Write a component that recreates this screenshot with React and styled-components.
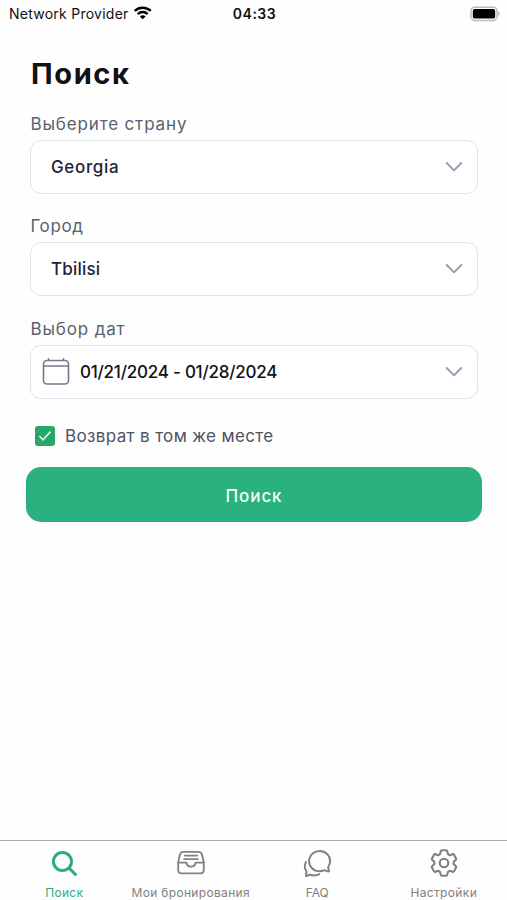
import { useState } from "react";
import styled, { createGlobalStyle } from "styled-components";
import { IoSearch, IoChatbubblesOutline } from "react-icons/io5";
import { HiOutlineCog6Tooth } from "react-icons/hi2";

const GlobalStyle = createGlobalStyle`
    * {
        box-sizing: border-box;
    }
    body {
        margin: 0;
        background: #fefefe;
        font-family: Inter, "Liberation Sans", sans-serif;
    }
`;

const Tray = ({ size }) => (
    <svg width={size} height={size} viewBox="0 0 30 30" fill="none" stroke="currentColor" strokeWidth="1.8" strokeLinecap="round" strokeLinejoin="round">
        <path d="M2.2 14.2L3.9 6.8Q4.6 3.8 7.6 3.8H22.4Q25.4 3.8 26.1 6.8L27.8 14.2V21.8Q27.8 25.4 24.2 25.4H5.8Q2.2 25.4 2.2 21.8Z" />
        <path d="M2.2 14.6H10.6C10.9 20 19.1 20 19.4 14.6H27.8M8.8 7.6H21.2M8.2 11.2H21.8" />
    </svg>
);

const tabs = [
    { name: "Поиск", icon: IoSearch, size: 31, spacing: "0.3px" },
    { name: "Мои бронирования", icon: Tray, size: 30, spacing: "0.32px" },
    { name: "FAQ", icon: IoChatbubblesOutline, size: 31, spacing: "0" },
    { name: "Настройки", icon: HiOutlineCog6Tooth, size: 34, spacing: "0.35px" },
];

const Screen = styled.div`
    width: 100%;
    height: 900px;
    display: flex;
    flex-direction: column;
    overflow: hidden;
`;

const StatusBar = styled.header`
    height: 27px;
    padding: 0 7px 0 9px;
    display: grid;
    grid-template-columns: 1fr auto 1fr;
    align-items: center;
    color: #111;
`;

const Provider = styled.div`
    display: flex;
    align-items: center;
    gap: 5px;
    font-size: 14px;
    letter-spacing: 0.25px;
    white-space: nowrap;
`;

const Time = styled.div`
    font-size: 14px;
    font-weight: 600;
    letter-spacing: 0.5px;
`;

const BatteryIcon = styled.svg`
    justify-self: end;
    display: block;
`;

const Form = styled.main`
    flex: 1;
    padding: 28px 25px 0 26px;
`;

const Title = styled.h1`
    margin: 0 0 0 5px;
    height: 36px;
    line-height: 38px;
    font-size: 29px;
    font-weight: 700;
    letter-spacing: 1.6px;
    color: #101112;
`;

const Field = styled.div`
    margin: 0 4px;
    padding-top: 22px;

    & + & {
        padding-top: 21.4px;
    }
`;

const Label = styled.div`
    height: 27px;
    line-height: 22px;
    padding-left: 0.5px;
    font-size: 17px;
    letter-spacing: ${props => props.$spacing};
    color: #5b6070;
`;

const Select = styled.button`
    width: 448px;
    height: 54px;
    display: flex;
    align-items: center;
    padding: 0 14px 0 ${props => props.$withIcon ? "11px" : "20px"};
    border: 1.5px solid #dfe4e6;
    border-radius: 11px;
    background: #fff;
    color: ${props => props.$withIcon ? "#111214" : "#20233c"};
    font-family: inherit;
    font-size: 17px;
    font-weight: 500;
    text-align: left;
    cursor: pointer;
`;

const Value = styled.span`
    flex: 1;
    letter-spacing: ${props => props.$spacing};
`;

const CalendarIcon = styled.svg`
    margin-right: 10px;
`;

const CheckRow = styled.label`
    display: flex;
    align-items: center;
    height: 22px;
    margin: 26px 0 0 9px;
    font-size: 17px;
    letter-spacing: 0.36px;
    color: #4f5366;
    cursor: pointer;
`;

const CheckBox = styled.span`
    width: 20px;
    height: 20px;
    margin-right: 10px;
    display: flex;
    align-items: center;
    justify-content: center;
    border-radius: 3px;
    background: #27a768;
`;

const HiddenInput = styled.input`
    display: none;
`;

const SubmitButton = styled.button`
    width: 456px;
    height: 55px;
    margin-top: 20.5px;
    padding: 2px 0 0;
    border: none;
    border-radius: 15px;
    background: #2bb17f;
    color: #f4fffa;
    font-family: inherit;
    font-size: 17px;
    font-weight: 500;
    letter-spacing: 0.9px;
    cursor: pointer;
`;

const TabBar = styled.nav`
    height: 60px;
    padding-left: 1px;
    display: grid;
    grid-template-columns: repeat(4, 1fr);
    border-top: 1px solid #aaa;
`;

const Tab = styled.button`
    display: flex;
    flex-direction: column;
    align-items: center;
    padding: 7px 0 0;
    border: none;
    background: none;
    color: ${props => props.$active ? "#2bae7c" : "#808080"};
    font-family: inherit;
    cursor: pointer;
`;

const TabIcon = styled.span`
    height: 30px;
    display: flex;
    align-items: center;
`;

const TabLabel = styled.span`
    margin-top: 7px;
    line-height: 15px;
    font-size: 12px;
    letter-spacing: ${props => props.$spacing};
    white-space: nowrap;
`;

const Wifi = () => (
    <svg width="19" height="15" viewBox="0.8 0.6 20 15" fill="none" stroke="#000" strokeWidth="2.6">
        <path d="M1.6 5.4C6.2 0.9 13.8 0.9 18.4 5.4" />
        <path d="M4.8 8.7C7.7 5.8 12.3 5.8 15.2 8.7" />
        <path d="M7 11.2C8.6 9.6 11.4 9.6 13 11.2L10 14.2Z" fill="#000" stroke="none" />
    </svg>
);

const Battery = () => (
    <BatteryIcon width="31" height="16" viewBox="0 0 31 16">
        <rect x="2" y="1.2" width="26" height="13.2" rx="3.8" fill="#fff" stroke="#bdbdbd" strokeWidth="1.5" />
        <rect x="3.8" y="3" width="22.4" height="9.6" rx="2" fill="#000" />
        <path d="M29.2 5.6C31 6.2 31 9.4 29.2 10Z" fill="#aaa" />
    </BatteryIcon>
);

const Chevron = () => (
    <svg width="18" height="12" viewBox="0 0 18 12" fill="none" stroke="#989eae" strokeWidth="2" strokeLinecap="round" strokeLinejoin="round">
        <path d="M1.7 2L9 9.4L16.3 2" />
    </svg>
);

const Calendar = () => (
    <CalendarIcon width="28" height="28" viewBox="0 0 28 28" fill="none" stroke="#737990" strokeWidth="1.6" strokeLinecap="round">
        <rect x="1.5" y="2.5" width="25" height="23.5" rx="3.5" />
        <path d="M1.5 8H26.5M6.5 0.9V2.5M21.5 0.9V2.5" />
    </CalendarIcon>
);

const App = () => {
    const [activeTab, setActiveTab] = useState(tabs[0].name);
    const [sameReturn, setSameReturn] = useState(true);

    return <Screen>
        <GlobalStyle />
        <StatusBar>
            <Provider>Network Provider <Wifi /></Provider>
            <Time>04:33</Time>
            <Battery />
        </StatusBar>
        <Form>
            <Title>Поиск</Title>
            <Field>
                <Label $spacing="0.85px">Выберите страну</Label>
                <Select><Value $spacing="0.65px">Georgia</Value><Chevron /></Select>
            </Field>
            <Field>
                <Label $spacing="0.6px">Город</Label>
                <Select><Value $spacing="0.2px">Tbilisi</Value><Chevron /></Select>
            </Field>
            <Field>
                <Label $spacing="0.85px">Выбор дат</Label>
                <Select $withIcon>
                    <Calendar />
                    <Value $spacing="-0.23px">01/21/2024 - 01/28/2024</Value>
                    <Chevron />
                </Select>
            </Field>
            <CheckRow>
                <HiddenInput type="checkbox" checked={sameReturn} onChange={() => setSameReturn(!sameReturn)} />
                <CheckBox>
                    {sameReturn && <svg width="14" height="12" viewBox="0 0 14 12" fill="none" stroke="#d9f8e6" strokeWidth="1.6">
                        <path d="M1.3 6L5 9.8L12.5 1.6" />
                    </svg>}
                </CheckBox>
                Возврат в том же месте
            </CheckRow>
            <SubmitButton>Поиск</SubmitButton>
        </Form>
        <TabBar>
            {tabs.map(({ name, icon: Icon, size, spacing }) => (
                <Tab key={name} $active={name === activeTab} onClick={() => setActiveTab(name)}>
                    <TabIcon><Icon size={size} /></TabIcon>
                    <TabLabel $spacing={spacing}>{name}</TabLabel>
                </Tab>
            ))}
        </TabBar>
    </Screen>
};

export default App;
